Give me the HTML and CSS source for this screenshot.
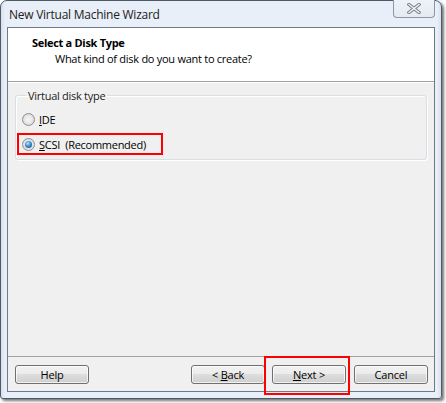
FILE: index.html
```html
<!DOCTYPE html>
<html>
<head>
<meta charset="utf-8">
<link rel="stylesheet" href="styles.css">
</head>
<body>
<div class="window">
  <div class="titlebar">
    <span class="title">New Virtual Machine Wizard</span>
    <div class="close">
      <svg width="14" height="11" viewBox="0 0 14 11">
        <path d="M2 1.5 L12 9.5 M12 1.5 L2 9.5" stroke="#7a7f86" stroke-width="3.4" stroke-linecap="square" fill="none"/>
        <path d="M2 1.5 L12 9.5 M12 1.5 L2 9.5" stroke="#f4f6f9" stroke-width="1.4" stroke-linecap="square" fill="none"/>
      </svg>
    </div>
  </div>
  <div class="client">
    <div class="header">
      <div class="h-title">Select a Disk Type</div>
      <div class="h-sub">What kind of disk do you want to create?</div>
    </div>
    <div class="main">
      <fieldset class="group">
        <legend>Virtual disk type</legend>
        <div class="option">
          <span class="radio"></span><span class="label"><u>I</u>DE</span>
        </div>
        <div class="option mark-scsi">
          <span class="radio checked"></span><span class="label"><u>S</u>CSI&nbsp;&nbsp;(Recommended)</span>
        </div>
      </fieldset>
    </div>
    <div class="footer">
      <button class="btn">Help</button>
      <span class="spacer"></span>
      <button class="btn">&lt; <u>B</u>ack</button>
      <span class="mark-next"><button class="btn"><u>N</u>ext &gt;</button></span>
      <button class="btn">Cancel</button>
    </div>
  </div>
</div>
</body>
</html>
```
FILE: styles.css
```css
* { box-sizing: border-box; }
html, body { margin: 0; padding: 0; background: #ffffff; }
body {
  font-family: "Open Sans", "Noto Sans", sans-serif;
  font-size: 11px;
  letter-spacing: -0.27px;
  color: #000;
  width: 446px;
  height: 403px;
  overflow: hidden;
}
.window {
  width: 442px;
  height: 399px;
  border: 1px solid #4f5a66;
  border-radius: 7px 7px 3px 3px;
  background: linear-gradient(90deg, #d6e1ee 0px, #e8eff8 4px, #e8eff8 436px, #d6e1ee 440px);
  box-shadow: 2px 2px 3px rgba(0, 0, 0, 0.55);
  display: flex;
  flex-direction: column;
}
.titlebar {
  height: 26px;
  flex: none;
  display: flex;
  align-items: flex-start;
  padding-left: 8px;
}
.title {
  font-size: 12px;
  color: #222;
  margin-top: 5px;
  letter-spacing: -0.25px;
}
.close {
  margin-left: auto;
  margin-right: 6px;
  margin-top: -1px;
  width: 42px;
  height: 18px;
  border: 1px solid #8d97a3;
  border-top: none;
  border-radius: 0 0 4px 4px;
  background: linear-gradient(#eef3f9, #e3eaf3);
  display: flex;
  align-items: center;
  justify-content: center;
  padding-bottom: 1px;
}
.close svg { display: block; }
.client {
  margin-left: 6px;
  width: 428px;
  height: 365px;
  border: 1px solid #6f7a86;
  background: #f0f0f0;
  display: flex;
  flex-direction: column;
}
.header {
  height: 54px;
  flex: none;
  background: #ffffff;
  border-bottom: 1px solid #a0a0a0;
  box-shadow: 0 1px 0 #ffffff;
  padding-top: 7px;
}
.h-title {
  font-weight: bold;
  font-size: 11px;
  margin-left: 24px;
  line-height: 15px;
  letter-spacing: -0.3px;
}
.h-sub {
  margin-left: 47px;
  line-height: 15px;
  margin-top: 1px;
}
.main {
  flex: 1;
  padding: 7px 7px 0 7px;
}
.group {
  margin: 0;
  padding: 7px 0 0 6px;
  height: 71px;
  border: 1px solid #d5dfe5;
  border-radius: 3px;
  box-shadow: inset 1px 1px 0 #ffffff, 1px 1px 0 #ffffff;
}
.group legend {
  padding: 0 2px;
  margin-left: 4px;
  color: #222;
  line-height: 13px;
}
.option {
  display: flex;
  align-items: center;
  height: 20px;
  margin-bottom: 4px;
}
.radio {
  width: 13px;
  height: 13px;
  border-radius: 50%;
  border: 1px solid #8e8f8f;
  background: radial-gradient(circle at 50% 50%, #f6f6f6 0, #e8e8e8 45%, #cfcfcf 100%);
  display: flex;
  align-items: center;
  justify-content: center;
  flex: none;
}
.radio.checked::after {
  content: "";
  width: 7px;
  height: 7px;
  border-radius: 50%;
  background: radial-gradient(circle at 40% 35%, #b9e4ff 0, #3e8fd0 45%, #10426f 100%);
}
.label { margin-left: 4px; }
.mark-scsi {
  width: 146px;
  height: 22px;
  margin-left: -5px;
  padding-left: 3px;
  border: 2px solid #ff0000;
}
.footer {
  height: 35px;
  flex: none;
  border-top: 1px solid #a0a0a0;
  display: flex;
  align-items: flex-start;
  padding: 8px 6px 0 7px;
}
.spacer { flex: 1; }
.btn {
  width: 74px;
  height: 19px;
  margin: 0;
  padding: 0;
  font-family: "Open Sans", "Noto Sans", sans-serif;
  font-size: 11px;
  letter-spacing: -0.2px;
  color: #000;
  border: 1px solid #707070;
  border-radius: 3px;
  background: linear-gradient(#f2f2f2 0, #ebebeb 50%, #dddddd 50%, #cfcfcf 100%);
  box-shadow: inset 0 0 0 1px rgba(255, 255, 255, 0.7);
  line-height: 16px;
  margin-left: 8px;
}
.footer > .btn:first-child { margin-left: 0; }
.mark-next {
  display: block;
  border: 2px solid #ff0000;
  margin: -9px -4px -11px -1px;
  padding: 7px 2px 9px 6px;
}
.mark-next .btn { margin-left: 0; display: block; }
.mark-next + .btn { margin-left: 8px; }
```
